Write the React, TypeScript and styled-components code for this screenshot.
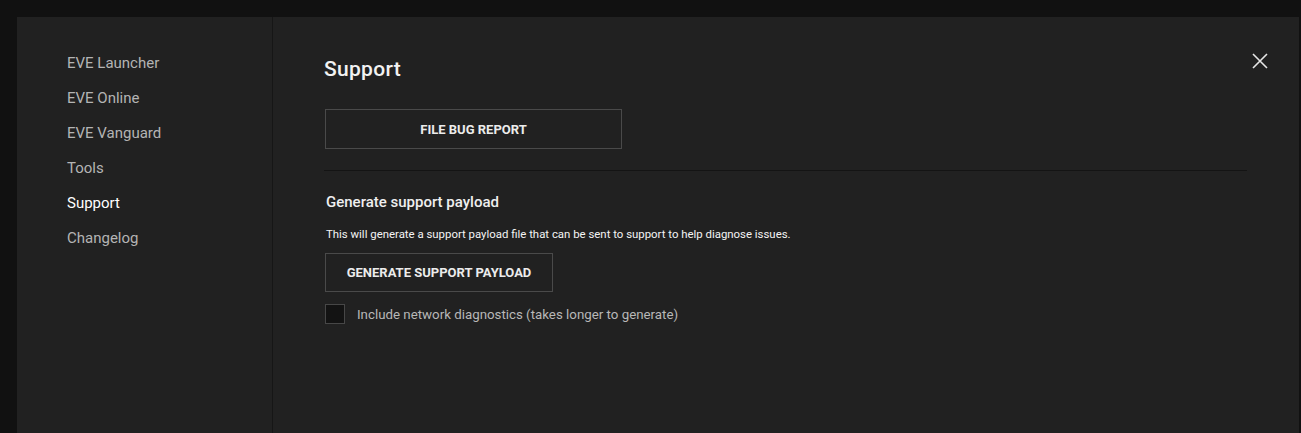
import React, { useState } from "react";
import styled, { createGlobalStyle } from "styled-components";

const GlobalStyle = createGlobalStyle`
  html, body {
    margin: 0;
    padding: 0;
    background: #111111;
    font-family: Roboto, "Liberation Sans", sans-serif;
    overflow: hidden;
  }
`;

const Backdrop = styled.div`
  min-height: 433px;
  box-sizing: border-box;
  padding: 17px 2px 0 17px;
  display: flex;
`;

const Modal = styled.div`
  position: relative;
  flex: 1;
  display: flex;
  background: #212121;
  min-height: 416px;
`;

const Sidebar = styled.nav`
  width: 256px;
  box-sizing: border-box;
  padding: 29px 0 0 50px;
  border-right: 1px solid #161616;
  display: flex;
  flex-direction: column;
`;

const NavItem = styled.a<{ active?: boolean }>`
  font-size: 15px;
  line-height: 35px;
  color: ${(p) => (p.active ? "#ffffff" : "#b4b4b4")};
  cursor: pointer;
  text-decoration: none;
`;

const Content = styled.section`
  flex: 1;
  padding: 38px 52px 0 51px;
  display: flex;
  flex-direction: column;
  align-items: flex-start;
`;

const Title = styled.h1`
  margin: 0;
  font-size: 21px;
  line-height: 28px;
  font-weight: 500;
  color: #f2f2f2;
  letter-spacing: 0.3px;
`;

const OutlineButton = styled.button<{ width: number; height: number }>`
  width: ${(p) => p.width}px;
  height: ${(p) => p.height}px;
  margin-left: 1px;
  background: transparent;
  border: 1px solid #4a4a4a;
  color: #ececec;
  font-family: inherit;
  font-size: 13px;
  font-weight: 700;
  text-transform: uppercase;
  cursor: pointer;
`;

const Divider = styled.hr`
  align-self: stretch;
  margin: 21px 0 0;
  border: none;
  border-top: 1px solid #141414;
`;

const SectionTitle = styled.h2`
  margin: 21px 0 0 2px;
  font-size: 15px;
  line-height: 20px;
  font-weight: 500;
  color: #efefef;
`;

const Hint = styled.p`
  margin: 14px 0 0 2px;
  font-size: 11.4px;
  line-height: 16px;
  color: #f4f4f4;
`;

const CheckRow = styled.label`
  display: flex;
  align-items: center;
  gap: 12px;
  margin: 12px 0 0 1px;
  cursor: pointer;
`;

const CheckBox = styled.span<{ checked: boolean }>`
  width: 18px;
  height: 18px;
  background: ${(p) => (p.checked ? "#3a3a3a" : "#131313")};
  border: 1px solid #474747;
`;

const CheckLabel = styled.span`
  font-size: 13.3px;
  color: #b8b8b8;
`;

const CloseButton = styled.button`
  position: absolute;
  top: 34px;
  right: 29px;
  width: 20px;
  height: 20px;
  padding: 0;
  background: none;
  border: none;
  cursor: pointer;
  display: flex;
  align-items: center;
  justify-content: center;
`;

const navItems = ["EVE Launcher", "EVE Online", "EVE Vanguard", "Tools", "Support", "Changelog"];

export default function App() {
  const [network, setNetwork] = useState(false);
  return (
    <>
      <GlobalStyle />
      <Backdrop>
        <Modal>
          <Sidebar>
            {navItems.map((item) => (
              <NavItem key={item} active={item === "Support"}>
                {item}
              </NavItem>
            ))}
          </Sidebar>
          <Content>
            <Title>Support</Title>
            <OutlineButton width={297} height={40} style={{ marginTop: 26 }}>
              File bug report
            </OutlineButton>
            <Divider />
            <SectionTitle>Generate support payload</SectionTitle>
            <Hint>This will generate a support payload file that can be sent to support to help diagnose issues.</Hint>
            <OutlineButton width={228} height={39} style={{ marginTop: 11 }}>
              Generate support payload
            </OutlineButton>
            <CheckRow onClick={() => setNetwork(!network)}>
              <CheckBox checked={network} />
              <CheckLabel>Include network diagnostics (takes longer to generate)</CheckLabel>
            </CheckRow>
          </Content>
          <CloseButton aria-label="Close">
            <svg width="16" height="16" viewBox="0 0 16 16">
              <path d="M1 1 L15 15 M15 1 L1 15" stroke="#e6e6e6" strokeWidth="1.6" />
            </svg>
          </CloseButton>
        </Modal>
      </Backdrop>
    </>
  );
}
